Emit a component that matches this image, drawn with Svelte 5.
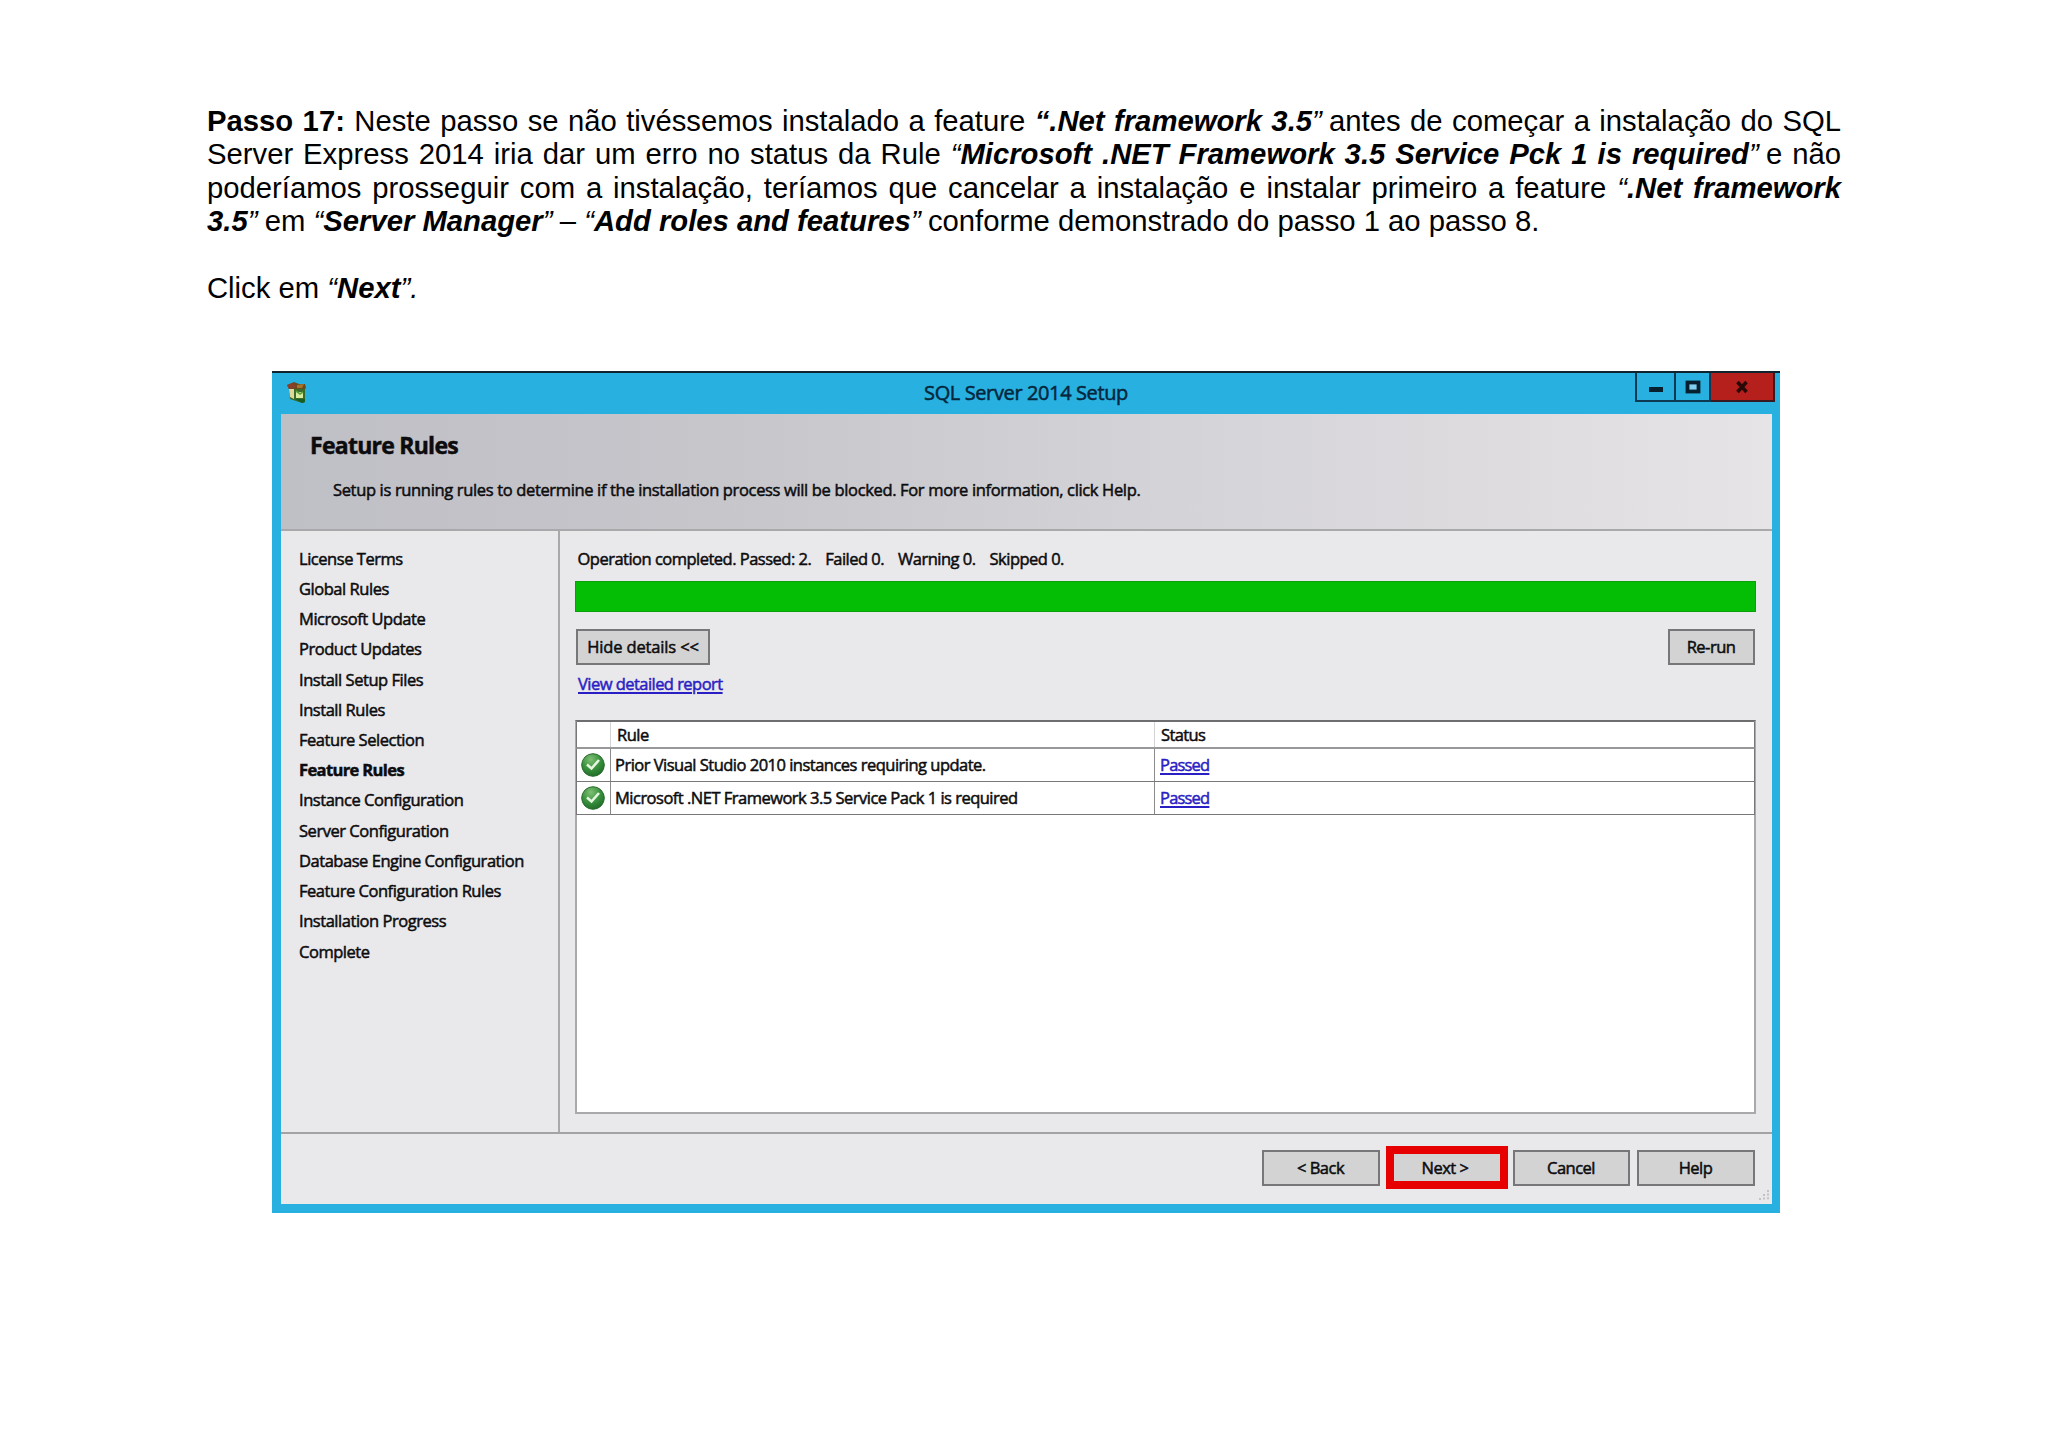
<script>
  const steps = [
    'License Terms',
    'Global Rules',
    'Microsoft Update',
    'Product Updates',
    'Install Setup Files',
    'Install Rules',
    'Feature Selection',
    'Feature Rules',
    'Instance Configuration',
    'Server Configuration',
    'Database Engine Configuration',
    'Feature Configuration Rules',
    'Installation Progress',
    'Complete',
  ];
  const current = 'Feature Rules';
  const rules = [
    { name: 'Prior Visual Studio 2010 instances requiring update.', status: 'Passed' },
    { name: 'Microsoft .NET Framework 3.5 Service Pack 1 is required', status: 'Passed' },
  ];
</script>

<main class="page">
  <section class="copy">
    <p class="line"><b>Passo 17:</b> Neste passo se não tivéssemos instalado a feature <b><i>“.Net framework 3.5</i></b><i>”</i><span class="thin"></span>antes de começar a instalação do SQL</p>
    <p class="line">Server Express 2014 iria dar um erro no status da Rule <i>“<b>Microsoft .NET Framework 3.5 Service Pck 1 is required</b>”</i><span class="thin"></span>e não</p>
    <p class="line">poderíamos prosseguir com a instalação, teríamos que cancelar a instalação e instalar primeiro a feature <i>“<b>.Net framework</b></i></p>
    <p class="line last"><i><b>3.5</b>”</i><span class="thin"></span>em <i>“<b>Server Manager</b>”</i><span class="thin"></span>– <i>“<b>Add roles and features</b>”</i><span class="thin"></span>conforme demonstrado do passo 1 ao passo 8.</p>
    <p class="line last click">Click em <i>“<b>Next</b>”.</i></p>
  </section>

  <section class="window">
    <header class="titlebar">
      <svg class="app-icon" viewBox="0 0 21 23" width="21" height="23">
        <path d="M1 4 L8 1 L13 3 L19 3 L20 7 L18 9 L3 8 Z" fill="#6d4a1c" />
        <path d="M1 4 L7 2 L10 6 L3 8 Z" fill="#8a3f2a" />
        <path d="M11 4 L18 3 L16 7 L11 7 Z" fill="#a5762e" />
        <path d="M3 8 H19 V21 L16 22 L4 18 Z" fill="#3a6a2c" />
        <path d="M3 8 H8 V18 L4 16 Z" fill="#e0d79a" />
        <path d="M10 11 H17 V17 H10 Z" fill="#d9eda0" />
        <path d="M10 10 L14 13 L17 11" fill="none" stroke="#5da03a" stroke-width="1.6" />
        <path d="M9 18 H19 V21 L16 22 Z" fill="#176022" />
      </svg>
      <h1>SQL Server 2014 Setup</h1>
      <div class="controls">
        <span class="ctl min"><svg viewBox="0 0 16 14" width="16" height="14"><rect x="1" y="7" width="14" height="5" fill="#06202f" /></svg></span>
        <span class="ctl max"><svg viewBox="0 0 16 14" width="16" height="14"><rect x="2.5" y="2.5" width="11" height="9" fill="#7fd0ee" stroke="#06202f" stroke-width="3.8" /></svg></span>
        <span class="ctl close"><svg viewBox="0 0 14 14" width="14" height="14"><path d="M2.5 2 L11.5 12 M11.5 2 L2.5 12" stroke="#2a0808" stroke-width="3.6" /></svg></span>
      </div>
    </header>

    <div class="client">
      <div class="banner">
        <h2>Feature Rules</h2>
        <p>Setup is running rules to determine if the installation process will be blocked. For more information, click Help.</p>
      </div>

      <div class="body">
        <ul class="steps">
          {#each steps as step}
            <li class:current={step === current}>{step}</li>
          {/each}
        </ul>

        <div class="content">
          <p class="summary"><span>Operation completed. Passed: 2.</span><span>Failed 0.</span><span>Warning 0.</span><span>Skipped 0.</span></p>
          <div class="progress"></div>
          <div class="actions">
            <button class="hide">Hide details &lt;&lt;</button>
            <button class="rerun">Re-run</button>
          </div>
          <span class="link report">View detailed report</span>

          <div class="list">
            <div class="row head">
              <span class="cell icon"></span>
              <span class="cell rule">Rule</span>
              <span class="cell status">Status</span>
            </div>
            {#each rules as rule}
              <div class="row">
                <span class="cell icon">
                  <svg viewBox="0 0 24 24" width="24" height="24">
                    <defs>
                      <radialGradient id="ball" cx="0.4" cy="0.25" r="0.8">
                        <stop offset="0" stop-color="#7fbf74" />
                        <stop offset="0.5" stop-color="#3c9440" />
                        <stop offset="1" stop-color="#1d6a26" />
                      </radialGradient>
                    </defs>
                    <circle cx="12" cy="12" r="11.3" fill="url(#ball)" stroke="#2c6b30" stroke-width="1" />
                    <path d="M6 11.5 L10.5 15.5 L18 7" fill="none" stroke="#e4f6df" stroke-width="2.6" />
                  </svg>
                </span>
                <span class="cell rule">{rule.name}</span>
                <span class="cell status"><span class="link">{rule.status}</span></span>
              </div>
            {/each}
          </div>
        </div>
      </div>

      <footer class="footer">
        <button class="back">&lt; Back</button>
        <button class="next">Next &gt;</button>
        <button class="cancel">Cancel</button>
        <button class="help">Help</button>
        <svg class="grip" viewBox="0 0 12 12" width="12" height="12">
          <path d="M10 1 V11 M6 5 V11 M2 9 V11" stroke="#b9b9bb" stroke-width="1.6" stroke-dasharray="2 1.6" />
        </svg>
      </footer>
    </div>
  </section>
</main>

<style>
  :global(body) {
    background: #fff;
  }
  .page {
    box-sizing: border-box;
    width: 2048px;
    height: 1448px;
    padding: 104.5px 207px 0;
    overflow: hidden;
    color: #000;
  }
  h1, h2, p, ul {
    margin: 0;
    padding: 0;
  }

  .copy {
    width: 1634px;
    height: 266.5px;
    font: 29.25px/33.5px "Liberation Sans", Arial, sans-serif;
  }
  .line {
    text-align: justify;
    text-align-last: justify;
    white-space: nowrap;
  }
  .line.last {
    text-align-last: left;
  }
  .click {
    margin-top: 33.5px;
  }
  .thin {
    display: inline-block;
    width: 7.3px;
  }

  .window {
    box-sizing: border-box;
    position: relative;
    width: 1508px;
    height: 842px;
    margin-left: 65px;
    padding: 0 8px 9px 9px;
    border-top: 2px solid #10242f;
    background: #27b0e0;
    font: 500 16.5px/24px "Open Sans", "Noto Sans", sans-serif;
    letter-spacing: -0.5px;
    color: #0c0c0e;
    -webkit-text-stroke: 0.5px currentColor;
  }
  .titlebar {
    position: relative;
    display: flex;
    align-items: center;
    justify-content: center;
    height: 41px;
  }
  .titlebar h1 {
    padding: 0 1px 1px 0;
    font-size: 20px;
    font-weight: 500;
    letter-spacing: -0.38px;
    line-height: 30px;
    color: #06263c;
  }
  .app-icon {
    position: absolute;
    left: 5px;
    top: 8px;
  }
  .controls {
    position: absolute;
    top: 0;
    right: -3px;
    display: flex;
    height: 29px;
  }
  .ctl {
    box-sizing: border-box;
    display: flex;
    align-items: center;
    justify-content: center;
    border: 2px solid #0d3a52;
    border-top: 0;
  }
  .ctl + .ctl {
    border-left: 0;
  }
  .min { width: 41px; }
  .max { width: 35px; }
  .close {
    width: 64px;
    background: #b5201c;
    border-color: #3a1a22;
  }

  .client {
    display: flex;
    flex-direction: column;
    height: 790px;
    background: #e9e8ea;
  }
  .banner {
    box-sizing: border-box;
    height: 117px;
    padding: 16px 0 0 29px;
    border-bottom: 2px solid #a9a9ac;
    background: linear-gradient(90deg, #bfbfc6 0%, #c6c6cb 30%, #d2d1d6 55%, #dddbde 80%, #e6e4e6 100%);
  }
  .banner h2 {
    font-size: 23px;
    font-weight: 700;
    letter-spacing: -0.74px;
    line-height: 30px;
  }
  .banner p {
    margin: 18px 0 0 23px;
    letter-spacing: -0.345px;
  }

  .body {
    display: flex;
    height: 601px;
  }
  .steps {
    box-sizing: border-box;
    width: 279px;
    padding: 12.6px 0 0 18px;
    border-right: 2px solid #a9a9ac;
    list-style: none;
    line-height: 30.23px;
    letter-spacing: -0.46px;
  }
  .steps .current {
    font-weight: 700;
    letter-spacing: -0.62px;
  }
  .content {
    display: flex;
    flex: 1;
    flex-direction: column;
    padding: 16px 16px 18px 15px;
  }
  .summary {
    display: flex;
    gap: 14px;
    padding-left: 2.5px;
    letter-spacing: -0.51px;
  }
  .progress {
    height: 31px;
    margin-top: 10px;
    background: #04bd05;
    box-shadow: inset 0 0 0 1px #0aa00c;
  }
  .actions {
    display: flex;
    justify-content: space-between;
    margin-top: 17px;
    padding: 0 1px;
  }
  button {
    box-sizing: border-box;
    height: 36px;
    padding: 0 1px 0 0;
    border: 2px solid #77777a;
    background: #d3d3d4;
    color: #0c0c0e;
    font: inherit;
    letter-spacing: inherit;
  }
  .hide {
    width: 134px;
    padding: 0;
    letter-spacing: -0.15px;
  }
  .rerun {
    width: 87px;
  }
  .link {
    color: #2a1fc4;
    text-decoration: underline;
    text-decoration-thickness: 2px;
    text-underline-offset: 2px;
  }
  .report {
    align-self: flex-start;
    margin: 7px 0 0 3px;
    letter-spacing: -0.54px;
  }
  .list {
    box-sizing: border-box;
    flex: 1;
    margin-top: 24px;
    border: 2px solid #a9a9ac;
    border-top-color: #6e6e70;
    background: #fff;
  }
  .row {
    box-sizing: border-box;
    display: flex;
    height: 33px;
    margin: 0 -1px;
    border: solid #78787a;
    border-width: 0 1px 1px;
  }
  .row.head {
    height: 27px;
    border-bottom: 2px solid #98989a;
  }
  .cell {
    box-sizing: border-box;
    display: flex;
    align-items: center;
  }
  .cell.icon {
    width: 34px;
    justify-content: center;
    padding-right: 1px;
    border-right: 1px solid #8a8a8c;
  }
  .cell.rule {
    width: 544px;
    padding-left: 4px;
    border-right: 1px solid #8a8a8c;
    letter-spacing: -0.51px;
  }
  .cell.status {
    padding-left: 5px;
    letter-spacing: -0.8px;
  }
  .head .cell {
    padding-top: 1px;
    border-color: #d4d4d6;
  }
  .head .rule {
    padding-left: 6px;
  }
  .head .status {
    padding-left: 6px;
    letter-spacing: -0.6px;
  }

  .footer {
    position: relative;
    box-sizing: border-box;
    display: flex;
    flex: 1;
    align-items: flex-start;
    justify-content: flex-end;
    padding: 16px 17px 0 0;
    border-top: 2px solid #a3a3a6;
  }
  .back { width: 118px; margin-right: 6px; }
  .next {
    width: 122px;
    height: 43px;
    margin: -4px 5px 0 0;
    padding: 1px 4px 0 0;
    border: 8px solid #e60000;
    line-height: 24px;
  }
  .cancel { width: 117px; margin-right: 7px; }
  .help { width: 118px; }
  .grip {
    position: absolute;
    right: 2px;
    bottom: 3px;
  }
</style>
